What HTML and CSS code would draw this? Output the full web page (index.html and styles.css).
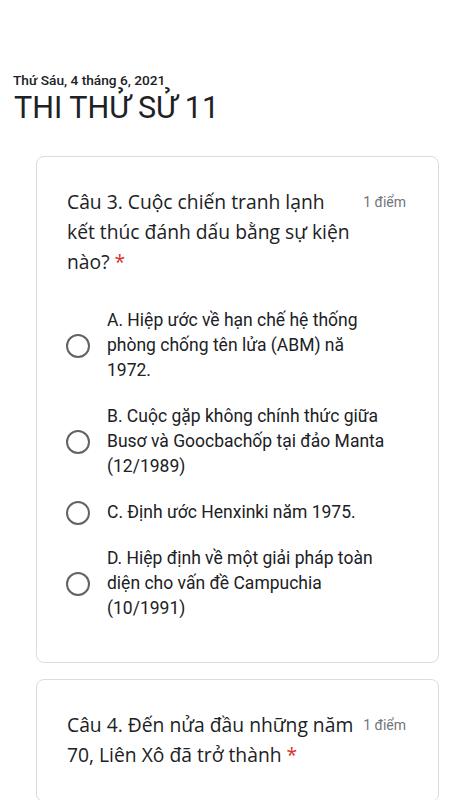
FILE: index.html
```html
<!DOCTYPE html>
<html lang="vi">
<head>
<meta charset="utf-8">
<link rel="stylesheet" href="styles.css">
</head>
<body>
<header class="header">
  <div class="date">Thứ Sáu, 4 tháng 6, 2021</div>
  <h1 class="title">THI THỬ SỬ 11</h1>
</header>
<main class="cards">
  <section class="card">
    <div class="q-row">
      <div class="q-text">Câu 3. Cuộc chiến tranh lạnh<br>kết thúc đánh dấu bằng sự kiện<br>nào? <span class="req">*</span></div>
      <div class="points">1 điểm</div>
    </div>
    <div class="options">
      <label class="option"><span class="radio"></span><span class="opt-text">A. Hiệp ước về hạn chế hệ thống<br>phòng chống tên lửa (ABM) nă<br>1972.</span></label>
      <label class="option"><span class="radio"></span><span class="opt-text">B. Cuộc gặp không chính thức giữa<br>Busơ và Goocbachốp tại đảo Manta<br>(12/1989)</span></label>
      <label class="option"><span class="radio"></span><span class="opt-text">C. Định ước Henxinki năm 1975.</span></label>
      <label class="option"><span class="radio"></span><span class="opt-text">D. Hiệp định về một giải pháp toàn<br>diện cho vấn đề Campuchia<br>(10/1991)</span></label>
    </div>
  </section>
  <section class="card">
    <div class="q-row">
      <div class="q-text">Câu 4. Đến nửa đầu những năm<br>70, Liên Xô đã trở thành <span class="req">*</span></div>
      <div class="points">1 điểm</div>
    </div>
  </section>
</main>
</body>
</html>
```
FILE: styles.css
```css
html, body {
  margin: 0;
  padding: 0;
  background: #ffffff;
}
body {
  font-family: Roboto, "Noto Sans", sans-serif;
  color: #202124;
  width: 450px;
  overflow: hidden;
}
.header {
  padding: 72px 13px 0;
}
.date {
  font-size: 13.7px;
  font-weight: 500;
  line-height: 16px;
  color: #202124;
}
.title {
  margin: 3px 0 0;
  font-size: 30.5px;
  font-weight: 400;
  line-height: 34px;
  color: #202124;
  padding-left: 1px;
}
.cards {
  display: flex;
  flex-direction: column;
  gap: 16px;
  padding: 31px 11px 40px 36px;
}
.card {
  border: 1px solid #dadce0;
  border-radius: 8px;
  padding: 30px 32px 31px 30px;
}
.q-row {
  display: flex;
  align-items: flex-start;
}
.q-text {
  flex: 1;
  font-family: "Open Sans", "Noto Sans", sans-serif;
  font-size: 19.3px;
  line-height: 30px;
  color: #202124;
}
.req {
  color: #d93025;
}
.points {
  font-size: 14px;
  line-height: 30px;
  color: #70757a;
  white-space: nowrap;
  margin-left: 8px;
}
.options {
  margin-top: 20px;
  display: flex;
  flex-direction: column;
}
.option {
  display: flex;
  align-items: center;
  gap: 17px;
  padding: 11px 0 10px;
}
.radio {
  flex: none;
  width: 20px;
  height: 20px;
  border: 2px solid #5f6368;
  border-radius: 50%;
  margin-left: -1px;
}
.opt-text {
  font-size: 17.5px;
  line-height: 25px;
  color: #202124;
}
```
